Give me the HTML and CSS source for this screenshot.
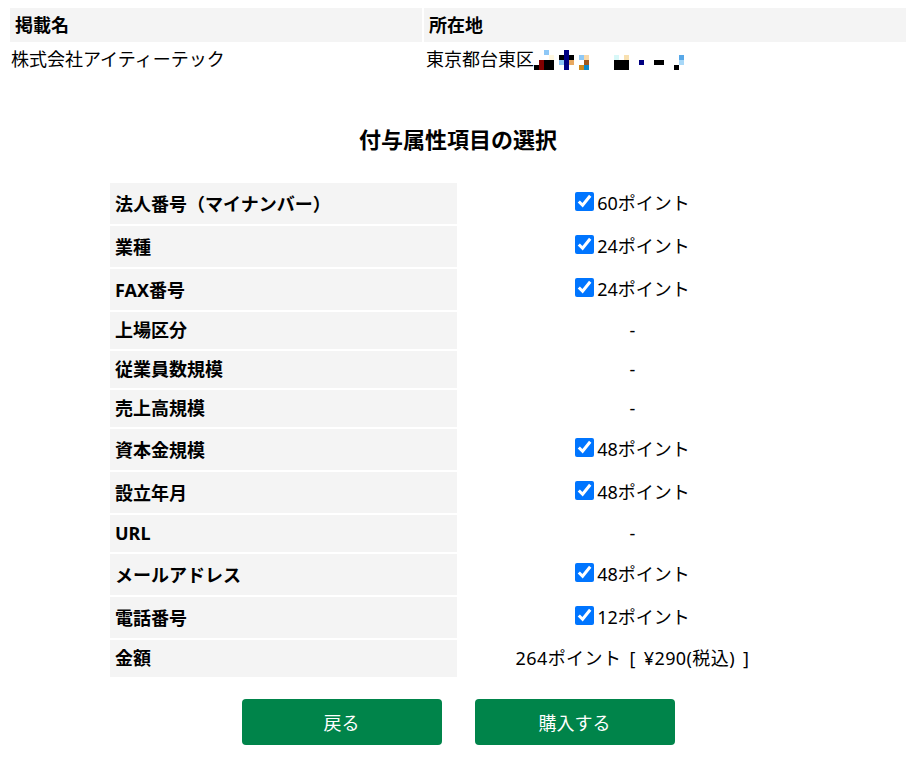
FILE: index.html
```html
<!DOCTYPE html>
<html lang="ja">
<head>
<meta charset="utf-8">
<title>付与属性項目の選択</title>
<link rel="stylesheet" href="styles.css">
</head>
<body>
<table class="info">
  <thead>
    <tr><th class="col-name">掲載名</th><th>所在地</th></tr>
  </thead>
  <tbody>
    <tr>
      <td>株式会社アイティーテック</td>
      <td>東京都台東区<svg class="mosaic" width="152" height="20" viewBox="0 0 152 20" aria-hidden="true">
        <rect x="10" y="0" width="5" height="5" fill="#8ec8f6"/>
        <rect x="15" y="5" width="5" height="5" fill="#fff8e0"/>
        <rect x="0" y="15" width="5" height="5" fill="#000"/>
        <rect x="5" y="10" width="5" height="10" fill="#800000"/>
        <rect x="10" y="10" width="10" height="10" fill="#000"/>
        <rect x="25" y="5" width="15" height="5" fill="#000"/>
        <rect x="30" y="0" width="5" height="20" fill="#000080"/>
        <rect x="25" y="10" width="5" height="5" fill="#8ec8f6"/>
        <rect x="35" y="10" width="5" height="5" fill="#e8a860"/>
        <rect x="45" y="5" width="5" height="5" fill="#8ec8f6"/>
        <rect x="50" y="5" width="5" height="5" fill="#f8d8a8"/>
        <rect x="50" y="10" width="5" height="5" fill="#a0581c"/>
        <rect x="45" y="15" width="5" height="5" fill="#cc8a1c"/>
        <rect x="50" y="15" width="5" height="5" fill="#0a88c8"/>
        <rect x="80" y="5" width="5" height="5" fill="#d8f8f8"/>
        <rect x="90" y="5" width="5" height="5" fill="#f8e0b0"/>
        <rect x="80" y="10" width="15" height="10" fill="#000"/>
        <rect x="105" y="10" width="5" height="5" fill="#000080"/>
        <rect x="120" y="10" width="10" height="5" fill="#000"/>
        <rect x="145" y="5" width="5" height="5" fill="#58a8e8"/>
        <rect x="145" y="10" width="5" height="5" fill="#a8d8f8"/>
        <rect x="140" y="15" width="5" height="5" fill="#000"/>
      </svg></td>
    </tr>
  </tbody>
</table>

<h2 class="title">付与属性項目の選択</h2>

<table class="attrs">
  <tbody>
    <tr class="chk"><th>法人番号（マイナンバー）</th><td><label><input type="checkbox" checked>60ポイント</label></td></tr>
    <tr class="chk"><th>業種</th><td><label><input type="checkbox" checked>24ポイント</label></td></tr>
    <tr class="chk"><th>FAX番号</th><td><label><input type="checkbox" checked>24ポイント</label></td></tr>
    <tr><th>上場区分</th><td>-</td></tr>
    <tr><th>従業員数規模</th><td>-</td></tr>
    <tr><th>売上高規模</th><td>-</td></tr>
    <tr class="chk"><th>資本金規模</th><td><label><input type="checkbox" checked>48ポイント</label></td></tr>
    <tr class="chk"><th>設立年月</th><td><label><input type="checkbox" checked>48ポイント</label></td></tr>
    <tr><th>URL</th><td>-</td></tr>
    <tr class="chk"><th>メールアドレス</th><td><label><input type="checkbox" checked>48ポイント</label></td></tr>
    <tr class="chk"><th>電話番号</th><td><label><input type="checkbox" checked>12ポイント</label></td></tr>
    <tr><th>金額</th><td class="total">264ポイント [ ¥290(税込) ]</td></tr>
  </tbody>
</table>

<div class="actions">
  <button type="button" class="btn">戻る</button>
  <button type="button" class="btn">購入する</button>
</div>
</body>
</html>
```

FILE: styles.css
```css
body {
  margin: 8px;
  font-family: "Noto Sans", "Noto Sans CJK JP", sans-serif;
  font-size: 18px;
  color: #000;
  background: #fff;
}

table {
  border-collapse: separate;
}

.info {
  width: 100%;
  border-spacing: 2px 0;
  margin-top: -2px;
}

.info th,
.info td {
  text-align: left;
  font-size: 18px;
}

.info th {
  background: #f4f4f4;
  font-weight: bold;
  height: 36px;
  padding: 0 5px;
}

.info td {
  height: 32px;
  padding: 0 2px 0 1px;
  vertical-align: middle;
}

.info td + td {
  padding-left: 2px;
}

.info .col-name {
  width: 402px;
}

.mosaic {
  display: inline-block;
  vertical-align: -4px;
}

.title {
  text-align: center;
  font-size: 22px;
  font-weight: bold;
  margin: 50px 0 27px;
  line-height: 30px;
}

.attrs {
  width: 700px;
  margin: 0 auto;
  border-spacing: 2px;
}

.attrs th {
  background: #f4f4f4;
  text-align: left;
  font-weight: bold;
  width: 337px;
  padding: 6px 5px;
  line-height: 25px;
  height: 25px;
}

.attrs td {
  text-align: center;
  padding: 6px 5px;
  line-height: 25px;
}

.attrs tr.chk th,
.attrs tr.chk td {
  padding-top: 8px;
  padding-bottom: 7px;
}

.attrs .total {
  word-spacing: 3px;
  letter-spacing: 0.4px;
}

.attrs label {
  display: inline-flex;
  align-items: center;
}

.attrs input[type="checkbox"] {
  width: 19px;
  height: 19px;
  margin: 0 3px 4px 0;
  accent-color: #0075ff;
}

.actions {
  display: flex;
  justify-content: center;
  gap: 33px;
  margin-top: 20px;
}

.btn {
  width: 200px;
  height: 46px;
  border: none;
  border-radius: 4px;
  background: #00844a;
  color: #fff;
  font-family: "Noto Sans", "Noto Sans CJK JP", sans-serif;
  font-size: 18px;
  cursor: pointer;
}
```
